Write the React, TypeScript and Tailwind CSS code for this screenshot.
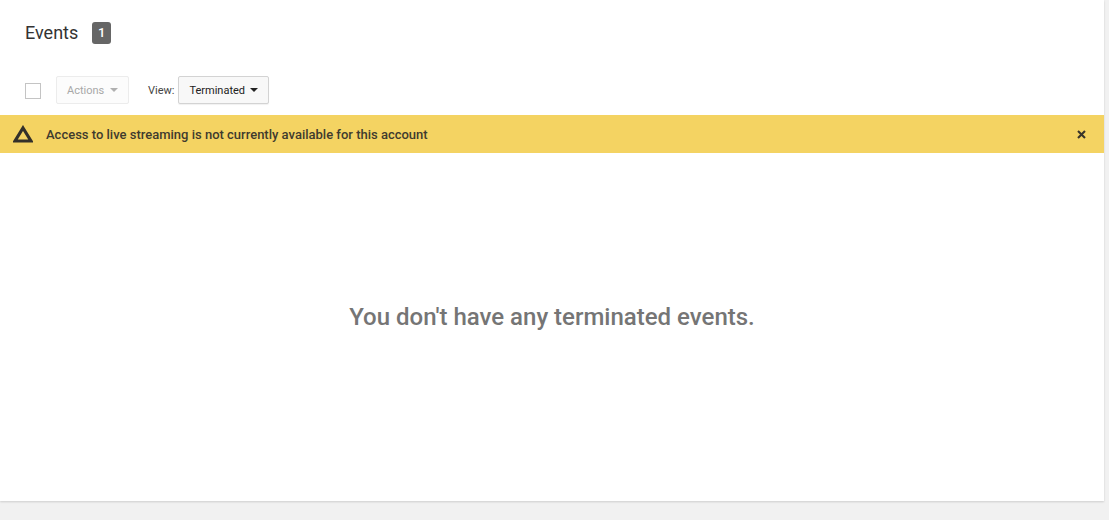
export default function App() {
  return (
    <div className="h-[520px] w-[1109px] overflow-hidden bg-[#f1f1f1] font-['Roboto',sans-serif]">
      <div className="flex h-[501px] w-[1104px] flex-col bg-white shadow-[0_1px_2px_rgba(0,0,0,0.15)]">
        <div className="flex h-[76px] shrink-0 items-start pl-[25px] pt-[22px]">
          <h1 className="text-[18px] leading-[21px] font-normal text-[#333333]">Events</h1>
          <span className="ml-[14px] flex h-[22px] w-[19px] items-center justify-center rounded-[3px] bg-[#666666] text-[13px] font-medium text-white">1</span>
        </div>
        <div className="flex h-[39px] shrink-0 items-start pl-[25px]">
          <span className="mt-[7px] h-4 w-4 border border-[#c4c4c4] bg-white" />
          <button className="ml-[15px] flex h-7 w-[73px] items-center rounded-[2px] border border-[#ececec] bg-[#fcfcfc] pl-[10px] pt-[2px] text-[11px] text-[#a8a8a8]">
            Actions
            <span className="ml-[6px] -mt-[3px] h-0 w-0 border-x-4 border-t-4 border-x-transparent border-t-[#b0b0b0]" />
          </button>
          <span className="ml-[19px] mt-[8px] text-[11px] leading-[14px] text-[#444444]">View:</span>
          <button className="ml-[4px] flex h-7 w-[91px] items-center rounded-[2px] border border-[#d3d3d3] bg-[#f8f8f8] pl-[10px] pt-[2px] text-[11px] text-[#222222] shadow-[0_1px_1px_rgba(0,0,0,0.06)]">
            Terminated
            <span className="ml-[5px] -mt-[3px] h-0 w-0 border-x-4 border-t-4 border-x-transparent border-t-[#222222]" />
          </button>
        </div>
        <div className="flex h-[38px] shrink-0 items-center bg-[#f4d362] pl-[13px] pr-[19px]">
          <svg width="20" height="18" viewBox="0 0 20 18" className="shrink-0">
            <path d="M10 3 18 16H2Z" fill="none" stroke="#33302a" strokeWidth="3.2" strokeLinejoin="miter" />
          </svg>
          <span className="ml-[13px] pt-[1px] text-[13px] font-medium text-[#3f3b2e]">Access to live streaming is not currently available for this account</span>
          <svg width="9" height="9" viewBox="0 0 9 9" className="-mr-[1px] ml-auto">
            <path d="M1 1 8 8M8 1 1 8" stroke="#38342a" strokeWidth="2.1" />
          </svg>
        </div>
        <div className="flex flex-1 items-center justify-center pb-[21px] text-[24px] font-medium text-[#757575]">
          You don't have any terminated events.
        </div>
      </div>
    </div>
  );
}
